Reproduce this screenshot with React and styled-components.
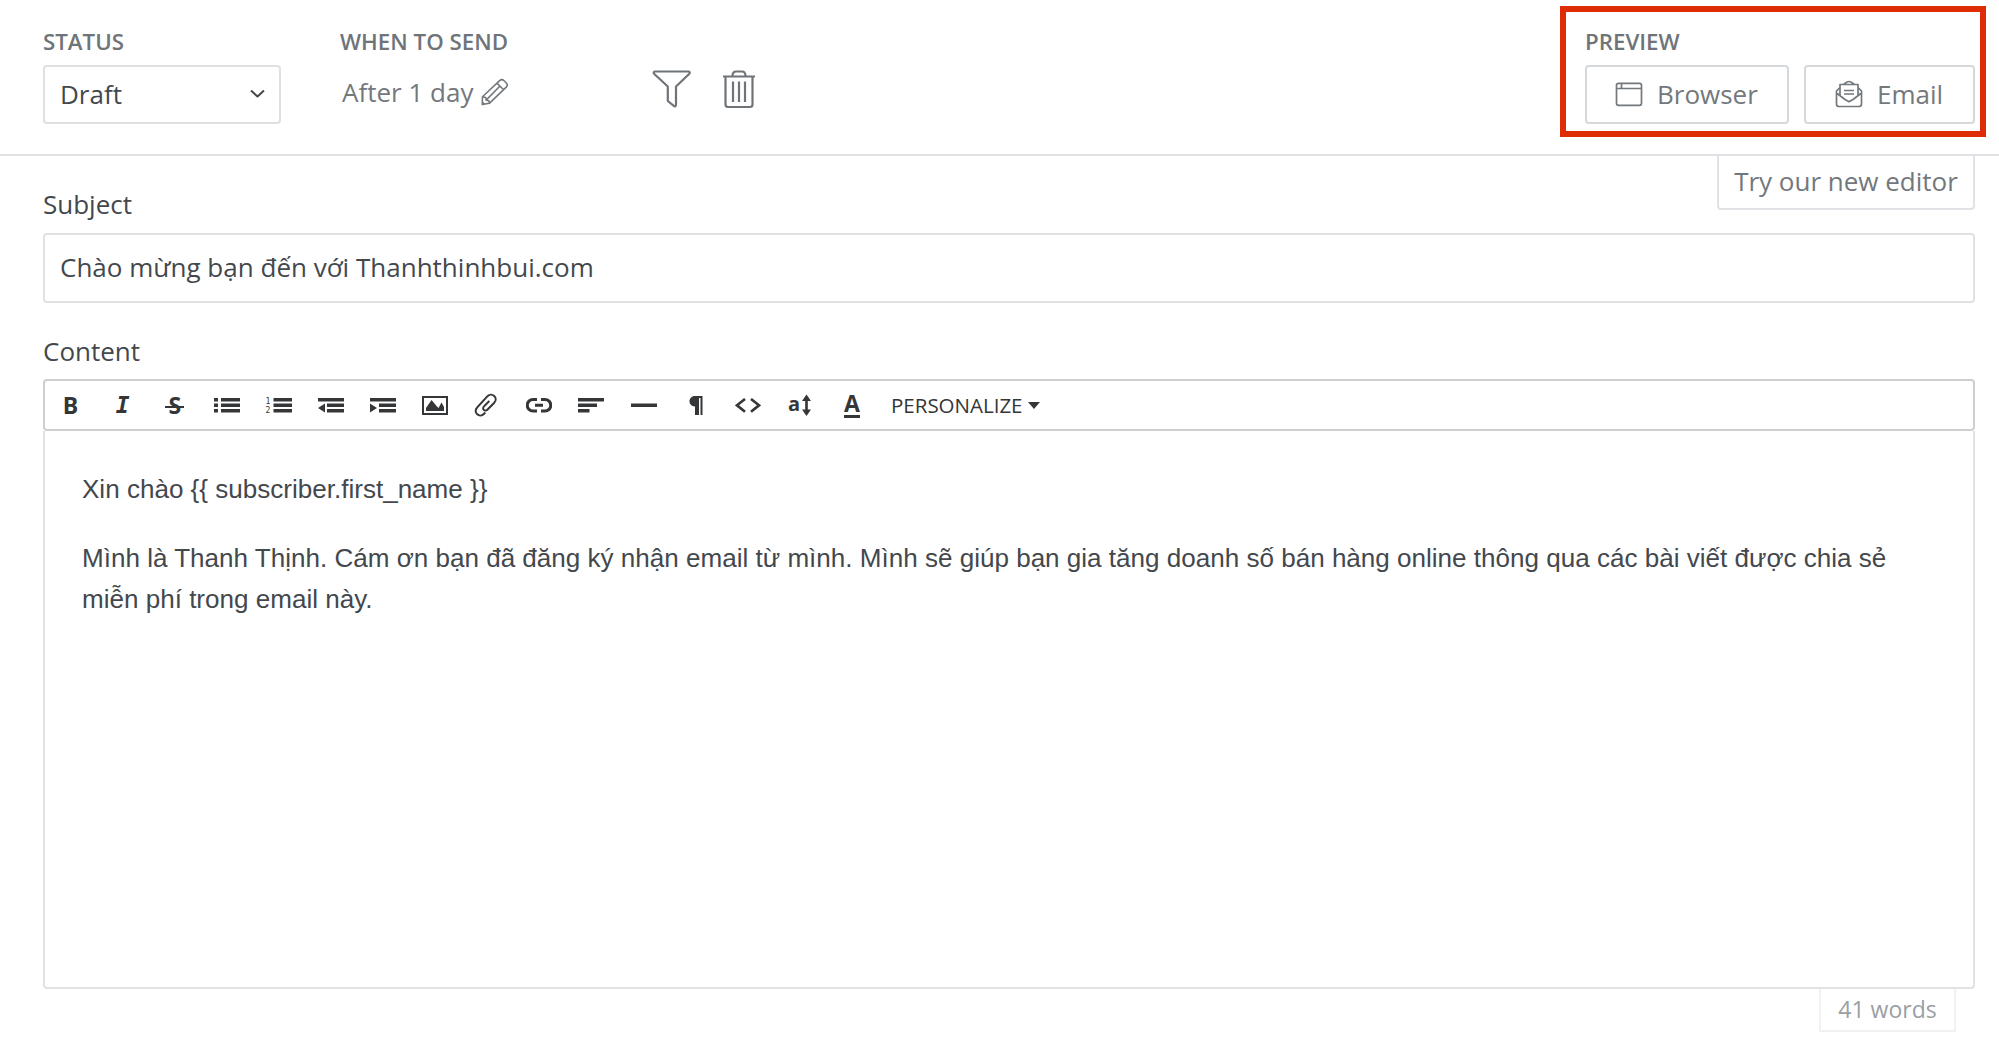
import React, { useState } from 'react';
import styled, { createGlobalStyle } from 'styled-components';

const GlobalStyle = createGlobalStyle`
  * {
    box-sizing: border-box;
  }

  body {
    margin: 0;
    background: #fff;
    color: #43484d;
    font-family: "Open Sans", "Noto Sans", sans-serif;
    font-size: 26px;
  }

  button, input {
    font: inherit;
    color: inherit;
  }
`;

const Page = styled.div`
  width: 1999px;
  height: 1053px;
  overflow: hidden;
`;

const Header = styled.header`
  display: flex;
  height: 156px;
  padding: 27px 24px 0 43px;
  border-bottom: 2px solid #e0e2e5;
`;

const Group = styled.div`
  position: relative;
  display: flex;
  flex-direction: column;
  gap: 8px;
  width: ${(props) => props.width || 'auto'};
  margin-left: ${(props) => props.left || '0'};
`;

const Label = styled.div`
  height: 30px;
  line-height: 30px;
  font-size: 22.3px;
  font-weight: 600;
  color: #6f7479;
  white-space: nowrap;
`;

const Select = styled.button`
  display: flex;
  align-items: center;
  justify-content: space-between;
  height: 59px;
  padding: 0 14px 2px 15px;
  border: 2px solid #dde1e3;
  border-radius: 4px;
  background: #fff;
`;

const SendTime = styled.div`
  display: flex;
  align-items: center;
  gap: 8px;
  height: 54px;
  padding-left: 2px;
  color: #73787d;
  white-space: nowrap;
`;

const HeaderIcons = styled.div`
  display: flex;
  gap: 31px;
  margin: 42px auto 0 143px;
  color: #6f7479;
`;

const Buttons = styled.div`
  display: flex;
  gap: 15px;
`;

const PreviewButton = styled.button`
  display: flex;
  align-items: center;
  gap: 14px;
  width: ${(props) => props.width};
  height: 59px;
  padding: 0 0 2px ${(props) => props.indent || '29px'};
  border: 2px solid #d5d9db;
  border-radius: 4px;
  background: #fff;
  color: #73787d;
`;

const Highlight = styled.div`
  position: absolute;
  top: -21px;
  left: -25px;
  width: 426px;
  height: 131px;
  border: 6px solid #de2c04;
  pointer-events: none;
`;

const Main = styled.main`
  display: flex;
  flex-direction: column;
  padding: 0 24px 0 43px;
`;

const SubjectRow = styled.div`
  display: flex;
  align-items: flex-start;
  justify-content: space-between;
  height: 77px;
`;

const FieldLabel = styled.label`
  height: 36px;
  margin-top: ${(props) => props.top};
  line-height: 36px;
`;

const TryEditor = styled.button`
  width: 258px;
  height: 54px;
  padding: 0 0 2px;
  border: 2px solid #e0e2e5;
  border-top: 0;
  border-radius: 0 0 4px 4px;
  background: #fff;
  color: #73787d;
  white-space: nowrap;
`;

const SubjectInput = styled.input`
  height: 70px;
  padding: 0 15px 2px;
  border: 2px solid #dfe2e4;
  border-radius: 4px;
  outline: none;
  font-size: 26.02px;
`;

const Toolbar = styled.div`
  display: flex;
  align-items: center;
  height: 52px;
  margin-top: 10px;
  border: 2px solid #cdcfd0;
  border-radius: 4px;
  color: #343638;
`;

const Tool = styled.button`
  display: flex;
  align-items: center;
  justify-content: center;
  width: 52.1px;
  height: 48px;
  padding: 0;
  border: 0;
  background: none;
`;

const Tools = styled.div`
  display: flex;
  margin-left: -0.5px;
`;

const Glyph = styled.span`
  font-family: ${(props) => (props.slab ? '"DejaVu Sans Mono", monospace' : '"Open Sans", sans-serif')};
  font-size: ${(props) => props.size || '23px'};
  font-style: ${(props) => (props.slab ? 'italic' : 'normal')};
  font-weight: 700;
  line-height: 26px;
`;

const Strike = styled(Glyph)`
  padding: 0 3px;
  background: linear-gradient(currentColor, currentColor) 0 14px / 100% 2px no-repeat;
`;

const Underlined = styled(Glyph)`
  height: 25px;
  border-bottom: 3px solid currentColor;
  line-height: 20px;
`;

const Personalize = styled.button`
  display: flex;
  align-items: center;
  gap: 5px;
  padding: 0 0 0 13px;
  border: 0;
  background: none;
  font-size: 20.5px;
`;

const Caret = styled.span`
  border: 6.5px solid transparent;
  border-top: 7px solid currentColor;
  border-bottom: 0;
`;

const Editor = styled.div`
  height: 558px;
  padding: 38px 60px 0 37px;
  border: 2px solid #e0e2e3;
  border-top: 0;
  border-radius: 0 0 4px 4px;
  font-family: "Liberation Sans", Arial, sans-serif;
  font-size: 26.05px;
  line-height: 41px;
  outline: none;
`;

const Paragraph = styled.p`
  margin: 0 0 28px;
`;

const WordCount = styled.div`
  align-self: flex-end;
  width: 137px;
  height: 43px;
  margin-right: 19px;
  border: 2px solid #f0f1f2;
  border-top: 0;
  color: #9a9fa4;
  font-size: 23px;
  line-height: 40px;
  text-align: center;
`;

const Svg = ({ w, h, sw = 2, children }) => (
  <svg
    width={w}
    height={h}
    viewBox={`0 0 ${w} ${h}`}
    fill="none"
    stroke="currentColor"
    strokeWidth={sw}
    strokeLinejoin="round"
  >
    {children}
  </svg>
);

const Solid = ({ d, children }) => (
  <svg width="26" height="26" viewBox="0 0 26 26" fill="currentColor" overflow="visible">
    {d && <path d={d} />}
    {children}
  </svg>
);

const tools = [
  { name: 'Bold', icon: <Glyph>B</Glyph> },
  { name: 'Italic', icon: <Glyph slab size="23px">I</Glyph> },
  { name: 'Strikethrough', icon: <Strike>S</Strike> },
  {
    name: 'Bullet list',
    icon: <Solid d="M0 6h4v3.5H0zM7 6h19v3.5H7zM0 11.5h4V15H0zM7 11.5h19V15H7zM0 17h4v3.5H0zM7 17h19v3.5H7z" />,
  },
  {
    name: 'Numbered list',
    icon: (
      <Solid d="M7.5 6H26v3.5H7.5zM7.5 11.5H26V15H7.5zM7.5 17H26v3.5H7.5z">
        <text x="-0.5" y="11.5" fontSize="8" fontFamily="DejaVu Sans Mono">1</text>
        <text x="-0.5" y="20.5" fontSize="8" fontFamily="DejaVu Sans Mono">2</text>
      </Solid>
    ),
  },
  { name: 'Outdent', icon: <Solid d="M0 6h26v3.5H0zM9 11.5h17V15H9zM9 17h17v3.5H9zM0 16l7-4.5v9z" /> },
  { name: 'Indent', icon: <Solid d="M0 6h26v3.5H0zM9 11.5h17V15H9zM9 17h17v3.5H9zM7 16l-7-4.5v9z" /> },
  {
    name: 'Image',
    icon: (
      <Solid>
        <path fillRule="evenodd" d="M0 4h26v19H0zM2 6v15h22V6z" />
        <path d="M4 19v-3l5.500-8 5.500 6.500 1.500 1.500 3-5.500 2.500 4.500V19z" />
      </Solid>
    ),
  },
  {
    name: 'File',
    icon: (
      <Svg w={26} h={26} sw={2}>
        <path d="M11.300 20.500 9.800 22c-1.800 1.800-4.600 2-6.600.3s-2-4.800-.2-6.600L13.500 4.200c2-2 4.800-2 6.700-.2s2 4.600.1 6.700l-7 7c-1.200 1.200-2.600 1.100-3.500.2s-1-2.300.2-3.500l5.300-5.400" />
      </Svg>
    ),
  },
  {
    name: 'Link',
    icon: (
      <Svg w={26} h={26} sw={3}>
        <path d="M11 7.500H7a5.700 5.700 0 0 0 0 11.500h4M15 7.500h4a5.700 5.700 0 0 1 0 11.500h-4M9 13.300h8" />
      </Svg>
    ),
  },
  { name: 'Alignment', icon: <Solid d="M0 6h26v3.5H0zM0 11.5h19V15H0zM0 17h11.5v3.5H0z" /> },
  { name: 'Rule', icon: <Solid d="M0 11.5h26V15H0z" /> },
  { name: 'Format', icon: <Solid d="M19.5 4v19h-2V6h-1.5v17h-4v-8.5C8.5 14.5 6.500 12 6.500 9.300S8.500 4 12 4z" /> },
  {
    name: 'HTML',
    icon: (
      <Svg w={26} h={26} sw={2.7}>
        <path d="M10 7 2 13.300l8 6.400M16 7l8 6.300-8 6.400" strokeLinejoin="miter" />
      </Svg>
    ),
  },
  {
    name: 'Font size',
    icon: (
      <Solid d="M19.500 2.500l4.500 6.500h-3.200v8.500H24L19.500 24 15 17.500h3.200V9H15z">
        <text x="1" y="18.700" fontSize="20" fontWeight="700" fontFamily="Open Sans">a</text>
      </Solid>
    ),
  },
  { name: 'Font color', icon: <Underlined>A</Underlined> },
];

const App = () => {
  const [subject, setSubject] = useState('Chào mừng bạn đến với Thanhthinhbui.com');

  return (
    <Page>
      <GlobalStyle />
      <Header>
        <Group width="238px">
          <Label>STATUS</Label>
          <Select>
            Draft
            <Svg w={15} h={10} sw={2}>
              <path d="M1 1.500l6.500 6 6.500-6" />
            </Svg>
          </Select>
        </Group>
        <Group width="169px" left="59px">
          <Label>WHEN TO SEND</Label>
          <SendTime>
            After 1 day
            <Svg w={28} h={28} sw={1.6}>
              <path d="M1.500 18.800 19.200 2.200c1.600-1.300 3-.9 4.300.4l2.200 2.200c1.300 1.400 1.400 2.700.2 4L8.500 25.500l-7.200 1.300zM16.200 5l6.700 6.700M1.500 18.800l3.200.7.6 2.800 2.700.6.500 2.600M1.500 24.500l2 2M5.200 22.300 18.800 8.400" />
            </Svg>
          </SendTime>
        </Group>
        <HeaderIcons>
          <Svg w={39} h={39} sw={2.2}>
            <path d="M3 2.500h33.500c1.400.2 1.600 1.500.6 2.500L24 17.500v18c0 1.800-1 2.200-2.200 1.300L15.800 32V17.500L2.300 5C1.300 4 1.500 2.700 3 2.500z" />
          </Svg>
          <Svg w={34} h={40} sw={2.2}>
            <path d="M1 7.500h32M3.500 7.500V35.500q0 2.500 2.500 2.500h22q2.500 0 2.500-2.500v-28M10.500 7c0-3 1.500-4.500 3.500-4.500h6c2 0 3.500 1.500 3.500 4.500M11 12.500V33M17 12.500V33M23 12.500V33" />
          </Svg>
        </HeaderIcons>
        <Group width="390px">
          <Label>PREVIEW</Label>
          <Buttons>
            <PreviewButton width="204px" indent="28px">
              <Svg w={28} h={26} sw={1.7}>
                <rect x="1.500" y="2.300" width="25" height="22" rx="2" />
                <path d="M1.500 7.500h25M6.500 2.500v5" />
              </Svg>
              Browser
            </PreviewButton>
            <PreviewButton width="171px">
              <Svg w={28} h={28} sw={1.7}>
                <path d="M5 15.500V4.500h18v11M5 7.500 1.500 11v13q0 2.500 2.500 2.500h20q2.500 0 2.500-2.500V11L23 7.500M1.500 13l8.500 6.500 4 2.200 4-2.200 8.500-6.500M8.500 4.500C10.500 3 12 1.500 14 1.500s3.500 1.500 5.500 3M9 10.500h10M9 14h10" />
              </Svg>
              Email
            </PreviewButton>
          </Buttons>
          <Highlight />
        </Group>
      </Header>
      <Main>
        <SubjectRow>
          <FieldLabel htmlFor="subject" top="30px">Subject</FieldLabel>
          <TryEditor>Try our new editor</TryEditor>
        </SubjectRow>
        <SubjectInput id="subject" value={subject} onChange={(e) => setSubject(e.target.value)} />
        <FieldLabel as="div" top="30px">Content</FieldLabel>
        <Toolbar>
          <Tools>
            {tools.map((tool) => (
              <Tool key={tool.name} aria-label={tool.name}>{tool.icon}</Tool>
            ))}
          </Tools>
          <Personalize>
            PERSONALIZE
            <Caret />
          </Personalize>
        </Toolbar>
        <Editor>
          <Paragraph>{'Xin chào {{ subscriber.first_name }}'}</Paragraph>
          <Paragraph>
            Mình là Thanh Thịnh. Cám ơn bạn đã đăng ký nhận email từ mình. Mình sẽ giúp bạn gia tăng doanh số bán
            hàng online thông qua các bài viết được chia sẻ miễn phí trong email này.
          </Paragraph>
        </Editor>
        <WordCount>41 words</WordCount>
      </Main>
    </Page>
  );
};

export default App;
